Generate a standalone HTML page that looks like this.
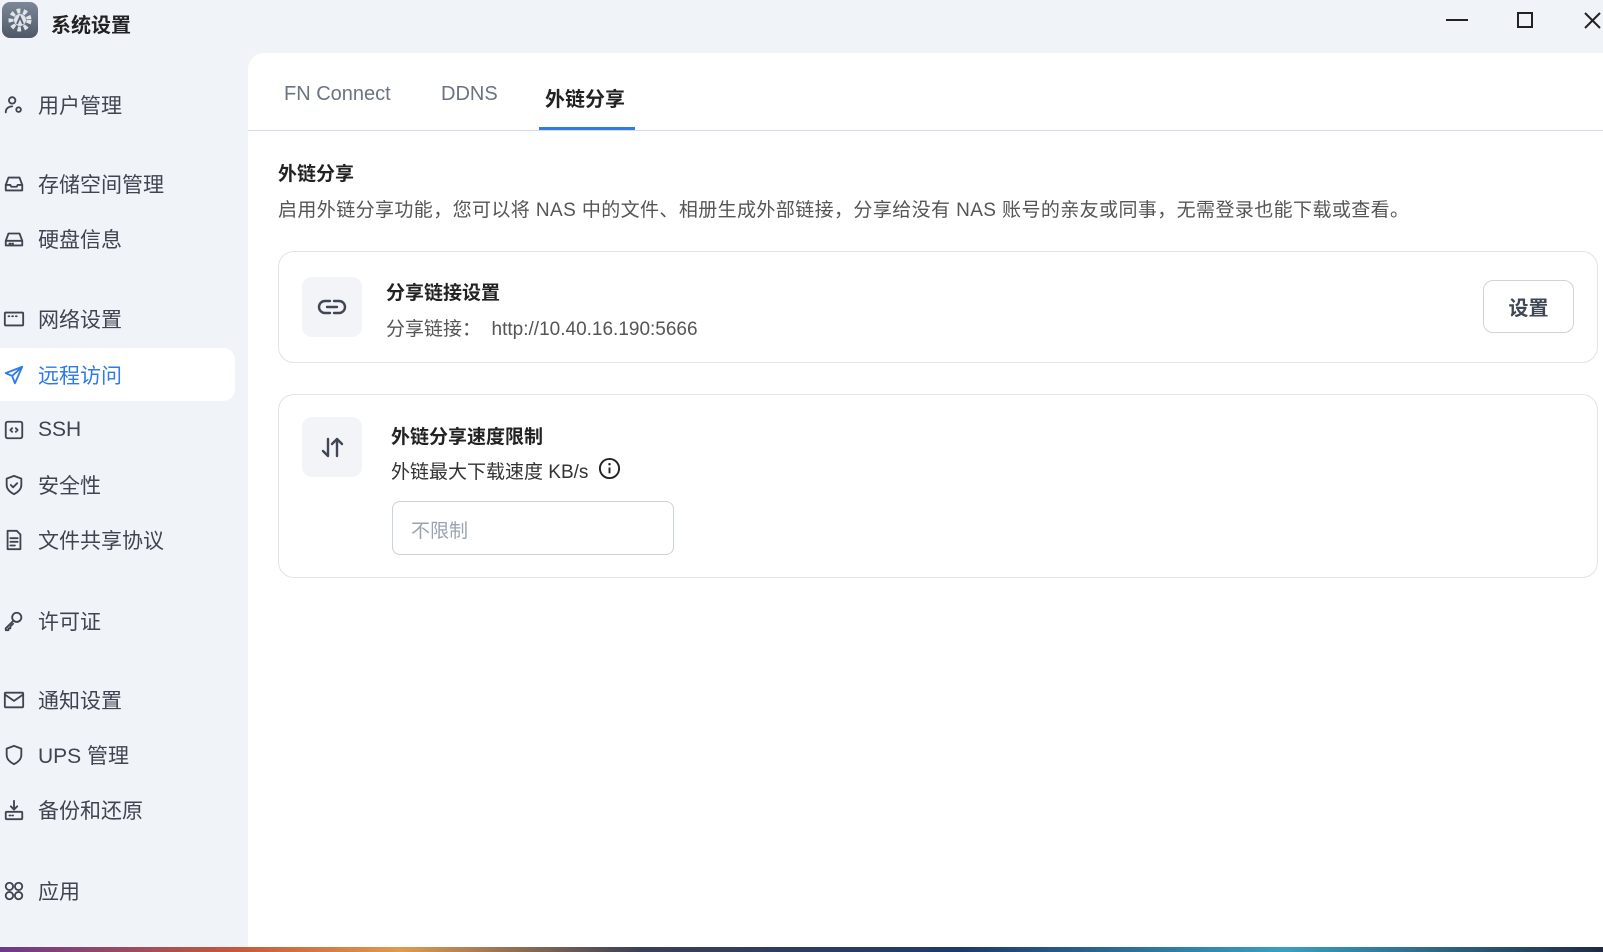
<!DOCTYPE html>
<html><head><meta charset="utf-8"><style>
*{margin:0;padding:0;box-sizing:border-box}
body{width:1603px;height:952px;background:#f0f3f8;font-family:"Liberation Sans","Noto Sans CJK SC",sans-serif;position:relative;overflow:hidden;color:#333}
.abs{position:absolute}
.logo{left:2px;top:2px;width:36px;height:36px;border-radius:8px;background:linear-gradient(#7d8797,#4f5867)}
.ttl{left:51px;top:9px;font-size:20px;font-weight:bold;color:#222}
.item{position:absolute;left:0;width:235px;height:40px;display:flex;align-items:center;font-size:21px;color:#3f4450}
.item svg{position:absolute;left:3px;width:22px;height:22px;fill:none;stroke:#3f4450;stroke-width:2;stroke-linecap:round;stroke-linejoin:round}
.item span{position:absolute;left:38px}
.act{background:#fff;border-radius:0 12px 12px 0;height:53px;color:#2f7ae5}
.act svg{stroke:#2f7ae5}
.main{left:248px;top:53px;width:1355px;height:894px;background:#fff;border-radius:16px 0 0 0}
.tab{top:83px;font-size:20px;color:#6b7480}
.card{border:1px solid #dfe3ea;border-radius:16px;background:#fff}
.ib{width:60px;height:60px;border-radius:10px;background:#f2f4f7}
.ib svg{width:60px;height:60px;fill:none;stroke:#3f4654;stroke-width:2.4;stroke-linecap:round;stroke-linejoin:round}
.f19{font-size:19px}
</style></head><body>
<div class="abs logo"><svg width="36" height="36" viewBox="0 0 36 36"><circle cx="18" cy="18" r="9" fill="none" stroke="#dfe3ea" stroke-width="5" stroke-dasharray="3.5 3"/><circle cx="18" cy="18" r="6" fill="#dfe3ea"/><path d="M15 22l3-7 3 7" stroke="#5a6373" stroke-width="1.8" fill="none"/></svg></div>
<div class="abs ttl">系统设置</div>
<svg class="abs" style="left:1446px;top:19px" width="22" height="2"><rect width="22" height="2" fill="#222"/></svg>
<div class="abs" style="left:1517px;top:12px;width:16px;height:16px;border:2px solid #222"></div>
<svg class="abs" style="left:1584px;top:12px" width="17" height="17"><path d="M1 1L16 16M16 1L1 16" stroke="#222" stroke-width="2"/></svg>

<div class="item" style="top:85px"><svg viewBox="0 0 24 24"><circle cx="10" cy="7" r="3.5"/><path d="M3 20c0-4 3-6.5 7-6.5"/><circle cx="17" cy="17" r="2.5"/></svg><span>用户管理</span></div>
<div class="item" style="top:164px"><svg viewBox="0 0 24 24"><path d="M3 13l3-8h12l3 8v6H3z"/><path d="M3 13h5l1 2h6l1-2h5"/></svg><span>存储空间管理</span></div>
<div class="item" style="top:219px"><svg viewBox="0 0 24 24"><path d="M3 14l3-8h12l3 8v5H3z M3 14h18"/><path d="M7 17h1M10 17h1"/></svg><span>硬盘信息</span></div>
<div class="item" style="top:299px"><svg viewBox="0 0 24 24"><rect x="2" y="5" width="20" height="14" rx="1"/><path d="M6 9h1M10 9h1M14 9h1"/></svg><span>网络设置</span></div>
<div class="item act" style="top:348px"><svg viewBox="0 0 24 24"><path d="M21 3L3 10l7 3 3 8z M10 13l11-10"/></svg><span>远程访问</span></div>
<div class="item" style="top:410px"><svg viewBox="0 0 24 24"><rect x="3" y="3" width="18" height="18" rx="2"/><path d="M10 10l-2 2 2 2M14 10l2 2-2 2"/></svg><span>SSH</span></div>
<div class="item" style="top:465px"><svg viewBox="0 0 24 24"><path d="M12 2l8 3v7c0 5-4 8-8 10-4-2-8-5-8-10V5z"/><path d="M8.5 12l2.5 2.5 4.5-4.5"/></svg><span>安全性</span></div>
<div class="item" style="top:520px"><svg viewBox="0 0 24 24"><path d="M5 2h10l4 4v16H5z M8 10h8M8 14h8M8 18h5"/></svg><span>文件共享协议</span></div>
<div class="item" style="top:601px"><svg viewBox="0 0 24 24"><circle cx="15" cy="8" r="5"/><path d="M11 12l-8 8v2h3v-2h2v-2l3-3"/></svg><span>许可证</span></div>
<div class="item" style="top:680px"><svg viewBox="0 0 24 24"><rect x="2" y="4" width="20" height="16" rx="1"/><path d="M2 6l10 7 10-7"/></svg><span>通知设置</span></div>
<div class="item" style="top:735px"><svg viewBox="0 0 24 24"><path d="M12 2l8 3v7c0 5-4 8-8 10-4-2-8-5-8-10V5z"/></svg><span>UPS 管理</span></div>
<div class="item" style="top:790px"><svg viewBox="0 0 24 24"><path d="M12 2v9M8.5 8l3.5 3.5 3.5-3.5"/><rect x="3" y="14" width="18" height="8" rx="1"/><path d="M7 18h1M10 18h1"/></svg><span>备份和还原</span></div>
<div class="item" style="top:871px"><svg viewBox="0 0 24 24"><circle cx="7" cy="7" r="4"/><circle cx="17" cy="7" r="4"/><circle cx="7" cy="17" r="4"/><circle cx="17" cy="17" r="4"/></svg><span>应用</span></div>

<div class="abs main"></div>
<div class="abs tab" style="left:284px">FN Connect</div>
<div class="abs tab" style="left:441px">DDNS</div>
<div class="abs tab" style="left:545px;color:#222;font-weight:bold">外链分享</div>
<div class="abs" style="left:248px;top:130px;width:1355px;height:1px;background:#d6dce6"></div>
<div class="abs" style="left:539px;top:127px;width:96px;height:3px;background:#2f7ae5"></div>

<div class="abs f19" style="left:278px;top:159px;font-weight:bold;color:#222">外链分享</div>
<div class="abs f19" style="left:278px;top:195px;color:#555;white-space:nowrap;letter-spacing:0.4px">启用外链分享功能，您可以将 NAS 中的文件、相册生成外部链接，分享给没有 NAS 账号的亲友或同事，无需登录也能下载或查看。</div>

<div class="abs card" style="left:278px;top:251px;width:1320px;height:112px"></div>
<div class="abs ib" style="left:302px;top:277px"><svg viewBox="0 0 60 60"><path d="M28 24h-5a6 6 0 000 12h5M32 24h5a6 6 0 010 12h-5M25 30h10"/></svg></div>
<div class="abs f19" style="left:386px;top:278px;font-weight:bold;color:#222">分享链接设置</div>
<div class="abs f19" style="left:386px;top:314px;color:#555">分享链接：&nbsp; http://10.40.16.190:5666</div>
<div class="abs" style="left:1483px;top:280px;width:91px;height:53px;border:1px solid #cdd3dd;border-radius:10px;font-size:20px;font-weight:bold;color:#3f4654;display:flex;align-items:center;justify-content:center">设置</div>

<div class="abs card" style="left:278px;top:394px;width:1320px;height:184px"></div>
<div class="abs ib" style="left:302px;top:417px"><svg viewBox="0 0 60 60"><path d="M26 22v17M21 34l5 5M35 39V22M30 27l5-5 5 5"/></svg></div>
<div class="abs f19" style="left:391px;top:422px;font-weight:bold;color:#222">外链分享速度限制</div>
<div class="abs f19" style="left:391px;top:457px;color:#333">外链最大下载速度 KB/s</div>
<svg class="abs" style="left:598px;top:457px" width="23" height="23" viewBox="0 0 24 24"><circle cx="12" cy="12" r="10" fill="none" stroke="#222" stroke-width="2"/><path d="M12 11v6" stroke="#222" stroke-width="2"/><circle cx="12" cy="7.5" r="1.3" fill="#222"/></svg>
<div class="abs" style="left:392px;top:501px;width:282px;height:54px;border:1px solid #c9d1dd;border-radius:8px;font-size:19px;color:#9aa3b0;padding:14px 0 0 18px">不限制</div>

<div class="abs" style="left:0;top:947px;width:1603px;height:5px;background:linear-gradient(90deg,#6b3a8a,#c65a3a 15%,#e09a50 25%,#3a3f55 40%,#1e3a6a 60%,#3aa0c0 80%,#1e2a45)"></div>
</body></html>
